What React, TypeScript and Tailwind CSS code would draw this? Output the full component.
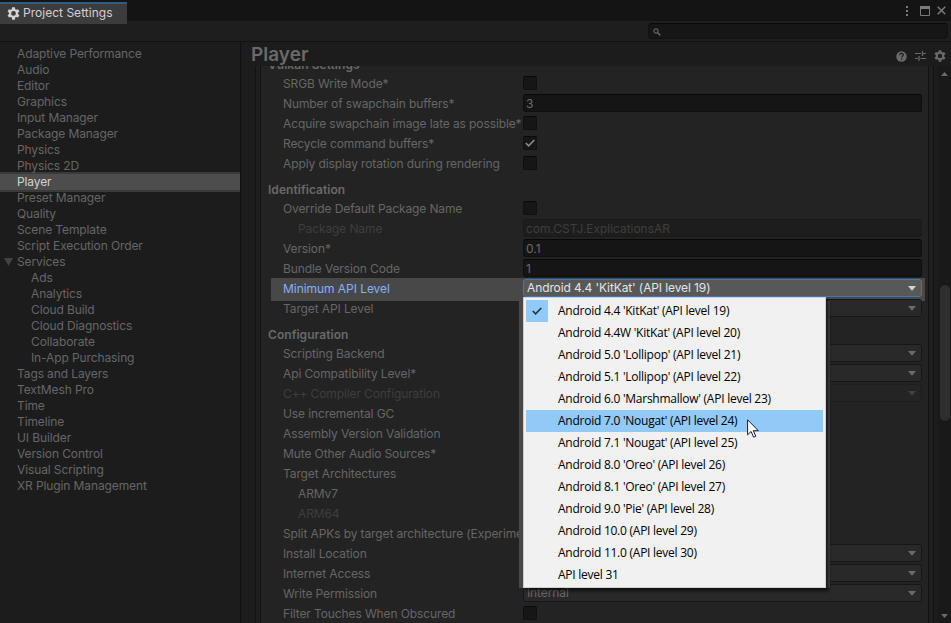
import React from "react";

const inter = "font-['Inter','Liberation_Sans',sans-serif]";

const sidebar: { label: string; child?: boolean; open?: boolean; selected?: boolean }[] = [
  { label: "Adaptive Performance" },
  { label: "Audio" },
  { label: "Editor" },
  { label: "Graphics" },
  { label: "Input Manager" },
  { label: "Package Manager" },
  { label: "Physics" },
  { label: "Physics 2D" },
  { label: "Player", selected: true },
  { label: "Preset Manager" },
  { label: "Quality" },
  { label: "Scene Template" },
  { label: "Script Execution Order" },
  { label: "Services", open: true },
  { label: "Ads", child: true },
  { label: "Analytics", child: true },
  { label: "Cloud Build", child: true },
  { label: "Cloud Diagnostics", child: true },
  { label: "Collaborate", child: true },
  { label: "In-App Purchasing", child: true },
  { label: "Tags and Layers" },
  { label: "TextMesh Pro" },
  { label: "Time" },
  { label: "Timeline" },
  { label: "UI Builder" },
  { label: "Version Control" },
  { label: "Visual Scripting" },
  { label: "XR Plugin Management" },
];

const levels = [
  "Android 4.4 'KitKat' (API level 19)",
  "Android 4.4W 'KitKat' (API level 20)",
  "Android 5.0 'Lollipop' (API level 21)",
  "Android 5.1 'Lollipop' (API level 22)",
  "Android 6.0 'Marshmallow' (API level 23)",
  "Android 7.0 'Nougat' (API level 24)",
  "Android 7.1 'Nougat' (API level 25)",
  "Android 8.0 'Oreo' (API level 26)",
  "Android 8.1 'Oreo' (API level 27)",
  "Android 9.0 'Pie' (API level 28)",
  "Android 10.0 (API level 29)",
  "Android 11.0 (API level 30)",
  "API level 31",
];

function Gear({ size, className }: { size: number; className: string }) {
  return (
    <svg width={size} height={size} viewBox="1 0.5 22 22" className={className} fill="currentColor">
      <path
        fillRule="evenodd"
        d="M9.7 1h4.6l.7 3.2 1.6.9 3.1-1 2.3 4-2.4 2.2v1.9l2.4 2.2-2.3 4-3.1-1-1.6.9-.7 3.7H9.700L9 18.300l-1.600-.9-3.100 1-2.300-4 2.400-2.200v-1.900L2 8.100l2.300-4 3.100 1L9 4.200zM12 7.300a4 4 0 1 0 0 8 4 4 0 0 0 0-8z"
      />
    </svg>
  );
}

function Tick({ className }: { className: string }) {
  return (
    <svg width="10" height="8" viewBox="0 0 10 8" className={className} fill="none" stroke="currentColor" strokeWidth="1.6">
      <path d="M.8 4 3.600 6.800 9.300 1" />
    </svg>
  );
}

function Arrow({ className }: { className: string }) {
  return (
    <svg width="8" height="5" viewBox="0 0 8 5" className={className} fill="currentColor">
      <path d="M0 0h8L4 4.700z" />
    </svg>
  );
}

function Row({ label, indent, dim, children }: { label: string; indent?: boolean; dim?: boolean; children?: React.ReactNode }) {
  return (
    <div className="flex h-5 items-start pl-[22px]">
      <div
        className={`w-60 shrink-0 whitespace-nowrap leading-[20px] ${indent ? "pl-[15px]" : ""} ${dim ? "text-[#3e3e3e]" : "text-[#666]"}`}
      >
        {label}
      </div>
      {children}
    </div>
  );
}

function Header({ children }: { children: string }) {
  return <div className="h-[25px] pl-[7px] pt-[6px] font-semibold leading-[20px] tracking-[0.05px] text-[#696969]">{children}</div>;
}

function Check({ on }: { on?: boolean }) {
  return (
    <div className="mt-[2px] flex h-[14px] w-[14px] items-center justify-center rounded-[2px] border border-[#111] border-t-[#090909] bg-[#161616]">
      {on && <Tick className="shrink-0 text-[#8a8a8a]" />}
    </div>
  );
}

function Field({ value, dim }: { value: string; dim?: boolean }) {
  return (
    <div
      className={`h-[18px] w-[399px] rounded-[3px] border pl-[2px] leading-[18px] tracking-[-0.03px] ${
        dim ? "border-[#191919] bg-[#1d1d1d] text-[#3e3e3e]" : "border-[#0f0f0f] border-t-[#080808] bg-[#151515] text-[#6b6b6b]"
      }`}
    >
      {value}
    </div>
  );
}

function Select({ value, dim }: { value?: string; dim?: boolean }) {
  return (
    <div
      className={`flex h-[18px] w-[399px] items-center justify-between rounded-[3px] border pl-[3px] pr-[5px] leading-[16px] ${
        dim ? "border-[#1e1e1e] bg-[#242424] text-[#404040]" : "border-[#171717] bg-[#292929] text-[#6b6b6b]"
      }`}
    >
      <span>{value}</span>
      <Arrow className="" />
    </div>
  );
}

function Popup() {
  return (
    <div className="absolute left-[519px] top-[301px] h-[287px] w-[311px] bg-[#484848] pl-1">
      <div className="-mt-1 h-[291px] w-[303px] border border-[#d0d0d0] bg-[#f1f1f1] px-[2px] pt-[2px] shadow-[3px_3px_3px_rgba(0,0,0,0.6)]">
        {levels.map((l, i) => (
          <div key={l} className={`flex h-[22px] items-center ${i === 5 ? "bg-[#91c9f7]" : ""}`}>
            <div className={`flex h-[22px] w-[22px] items-center justify-center ${i === 0 ? "bg-[#91c9f7]" : ""}`}>
              {i === 0 && <Tick className="text-[#26313a]" />}
            </div>
            <span className="whitespace-nowrap pl-[10px] font-['Open_Sans','Noto_Sans',sans-serif] text-[12px] tracking-[-0.25px] text-black">
              {l}
            </span>
          </div>
        ))}
      </div>
    </div>
  );
}

export default function App() {
  return (
    <div className={`relative flex h-[623px] w-[951px] flex-col overflow-hidden bg-[#1c1c1c] text-[12px] tracking-[-0.11px] ${inter}`}>
      <div className="flex h-[21px] shrink-0 justify-between bg-[#141414]">
        <div className="z-10 mt-[2px] flex h-[22px] w-[127px] items-center gap-[3px] border-t-2 border-[#2c5d87] bg-[#3c3c3c] pb-[2px] pl-[7px] text-[#d2d2d2]">
          <Gear size={13} className="shrink-0" />
          <span className="whitespace-nowrap tracking-[0.02px]">Project Settings</span>
        </div>
        <div className="flex items-center gap-[7px] pr-[5px] text-[#7a7a7a]">
          <svg width="16" height="12" viewBox="0 0 16 12" fill="currentColor">
            <path d="M7 1h2v2H7zM7 5h2v2H7zM7 9h2v2H7z" />
          </svg>
          <svg width="10" height="10" viewBox="0 0 10 10" className="-ml-[2px]">
            <path d="M.5 1.500h9v8h-9z" fill="none" stroke="currentColor" />
            <path d="M0 0h10v3H0z" fill="currentColor" />
          </svg>
          <svg width="9" height="9" viewBox="0 0 9 9" fill="none" stroke="currentColor" strokeWidth="1.500">
            <path d="M.7.700l7.600 7.600M8.300.700.7 8.300" />
          </svg>
        </div>
      </div>
      <div className="flex h-[21px] shrink-0 justify-end border-b border-[#121212] bg-[#1e1e1e] pr-[3px] pt-[2px]">
        <div className="h-4 w-[300px] rounded-[4px] border border-[#111] border-t-[#080808] bg-[#161616] pl-1 pt-1">
          <svg width="8" height="8" viewBox="0 0 8 8" fill="none" stroke="#777">
            <circle cx="3" cy="3" r="2.200" />
            <path d="M4.600 4.600 7.300 7.300" strokeWidth="1.300" />
          </svg>
        </div>
      </div>

      <div className="flex min-h-0 flex-1">
        <div className="w-[241px] shrink-0 border-r border-[#111] pt-1">
          {sidebar.map((s) => (
            <div
              key={s.label}
              className={`flex h-4 items-center whitespace-nowrap ${
                s.selected ? "bg-[#4d4d4d] text-[#d2d2d2] shadow-[0_-2px_0_#3a3a3a,0_2px_0_#3a3a3a]" : "text-[#666]"
              }`}
            >
              <div className={s.child ? "w-[31px] shrink-0" : "flex w-[17px] shrink-0 pl-1"}>
                {s.open && (
                  <svg width="9" height="8" viewBox="0 0 9 8" fill="#434343">
                    <path d="M0 0h9L4.500 8z" />
                  </svg>
                )}
              </div>
              {s.label}
            </div>
          ))}
        </div>

        <div className="flex min-w-0 flex-1 flex-col">
          <div className="flex h-6 shrink-0 items-center justify-between pl-[10px] pr-[5px]">
            <h1 className="pt-px text-[19px] font-semibold leading-6 tracking-[0px] text-[#6a6a6a]">Player</h1>
            <div className="mt-1 flex items-center gap-[8px] text-[#6a6a6a]">
              <svg width="11" height="11" viewBox="0 0 11 11">
                <circle cx="5.500" cy="5.500" r="5.200" fill="currentColor" />
                <path d="M3.800 4.200c0-2.400 3.500-2.300 3.500-.2 0 1.200-1.700 1.200-1.700 2.600" fill="none" stroke="#1c1c1c" strokeWidth="1.200" />
                <path d="M5 7.500h1.300v1.200H5z" fill="#1c1c1c" />
              </svg>
              <svg width="11" height="10" viewBox="0 0 11 10" fill="none" stroke="currentColor" strokeWidth="1.200">
                <path d="M0 2.500h6M7.500 0v5M7.500 2.500H11M0 7.500h3M4 5v5M5.500 7.500H11" />
              </svg>
              <Gear size={12} className="" />
            </div>
          </div>
          <div className="flex min-h-0 flex-1 overflow-hidden pl-[14px]">
            <div className="flex h-full w-[679px] shrink-0 border-x border-[#121212] bg-[#1f1f1f] px-1">
              <div className="h-full w-full overflow-hidden border-x border-[#121212] bg-[#232323]">
                <div className="-mt-[17px]">
                  <Header>Vulkan Settings</Header>
                  <Row label="SRGB Write Mode*"><Check /></Row>
                  <Row label="Number of swapchain buffers*"><Field value="3" /></Row>
                  <Row label="Acquire swapchain image late as possible*"><Check /></Row>
                  <Row label="Recycle command buffers*"><Check on /></Row>
                  <Row label="Apply display rotation during rendering"><Check /></Row>
                  <Header>Identification</Header>
                  <Row label="Override Default Package Name"><Check /></Row>
                  <Row label="Package Name" indent dim><Field value="com.CSTJ.ExplicationsAR" dim /></Row>
                  <Row label="Version*"><Field value="0.1" /></Row>
                  <Row label="Bundle Version Code"><Field value="1" /></Row>
                  <div className="ml-[10px] mr-[3px] flex h-5 bg-[#484848] pl-[12px] text-[#83b1fb] shadow-[0_-1px_0_#484848,0_2px_0_#484848]">
                    <div className="w-60 shrink-0 leading-[20px] tracking-[-0.05px]">Minimum API Level</div>
                    <div className="flex h-[18px] w-[399px] items-center justify-between rounded-[3px] border border-[#3a79bb] bg-[#585858] pl-[3px] pr-[5px] leading-[16px] text-[#e4e4e4]">
                      <span>Android 4.4 'KitKat' (API level 19)</span>
                      <Arrow className="text-[#d2d2d2]" />
                    </div>
                  </div>
                  <Row label="Target API Level"><Select /></Row>
                  <Header>Configuration</Header>
                  <Row label="Scripting Backend"><Select /></Row>
                  <Row label="Api Compatibility Level*"><Select /></Row>
                  <Row label="C++ Compiler Configuration" dim><Select dim /></Row>
                  <Row label="Use incremental GC" />
                  <Row label="Assembly Version Validation" />
                  <Row label="Mute Other Audio Sources*" />
                  <Row label="Target Architectures" />
                  <Row label="ARMv7" indent />
                  <Row label="ARM64" indent dim />
                  <Row label="Split APKs by target architecture (Experimental)" />
                  <Row label="Install Location"><Select /></Row>
                  <Row label="Internet Access"><Select /></Row>
                  <Row label="Write Permission"><Select value="Internal" /></Row>
                  <Row label="Filter Touches When Obscured"><Check /></Row>
                </div>
              </div>
            </div>
            <div className="ml-1 flex w-[13px] shrink-0 flex-col items-center bg-[#191919] pb-[5px] pt-[6px]">
              <svg width="7" height="4" viewBox="0 0 7 4" fill="#6a6a6a"><path d="M0 4h7L3.500 0z" /></svg>
              <div className="mt-[209px] h-[136px] w-[10px] rounded-full bg-[#2e2e2e]" />
              <svg width="7" height="4" viewBox="0 0 7 4" fill="#6a6a6a" className="mt-auto"><path d="M0 0h7L3.500 4z" /></svg>
            </div>
          </div>
        </div>
      </div>

      <Popup />
      <svg width="13" height="20" viewBox="0 0 13 20" className="absolute left-[747px] top-[419px]">
        <path d="M.6.800v15l3.500-3.300 2.500 5.700 2.200-1-2.500-5.500h5z" fill="#fff" stroke="#1b1b33" strokeWidth="1" />
      </svg>
    </div>
  );
}
